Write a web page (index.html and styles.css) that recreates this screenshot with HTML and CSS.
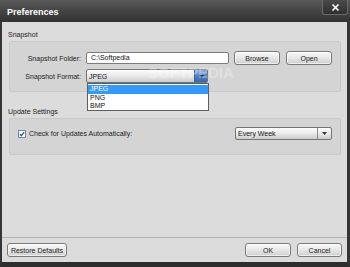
FILE: index.html
```html
<!DOCTYPE html>
<html>
<head>
<meta charset="utf-8">
<link rel="stylesheet" href="styles.css">
</head>
<body>
<div class="window">
  <div class="titlebar">
    <span class="title">Preferences</span>
    <div class="close">
      <svg width="9" height="9" viewBox="0 0 9 9"><path d="M1.5 1.5l6 6M7.5 1.5l-6 6" stroke="#fff" stroke-width="1.7" fill="none"/></svg>
    </div>
  </div>
  <div class="body">
    <div class="section-label">Snapshot</div>
    <div class="group snap">
      <div class="row">
        <span class="lbl">Snapshot Folder:</span>
        <div class="input">C:\Softpedia</div>
        <div class="btn browse">Browse</div>
        <div class="btn open">Open</div>
      </div>
      <div class="row second">
        <span class="lbl">Snapshot Format:</span>
        <div class="select fmt">
          <span class="val">JPEG</span>
          <span class="arrow blue"><svg width="5" height="3" viewBox="0 0 5 3"><path d="M0 0h5L2.5 3z" fill="#1a2a44"/></svg></span>
          <ul class="list">
            <li class="sel">JPEG</li>
            <li>PNG</li>
            <li>BMP</li>
          </ul>
        </div>
      </div>
    </div>
    <div class="section-label upd">Update Settings</div>
    <div class="group update">
      <div class="row">
        <span class="check"><svg width="8" height="8" viewBox="0 0 8 8"><rect x="0.5" y="0.5" width="7" height="7" fill="#fff" stroke="#6d87ad"/><path d="M2 4.2l1.4 1.5L6.2 2.2" stroke="#2a55a0" stroke-width="1.3" fill="none"/></svg></span>
        <span class="chk-text">Check for Updates Automatically:</span>
        <div class="select week">
          <span class="val">Every Week</span>
          <span class="arrow gray"><svg width="5" height="3" viewBox="0 0 5 3"><path d="M0 0h5L2.5 3z" fill="#333"/></svg></span>
        </div>
      </div>
    </div>
    <div class="spacer"></div>
    <div class="footer">
      <div class="btn restore">Restore Defaults</div>
      <div class="spacer-h"></div>
      <div class="btn ok">OK</div>
      <div class="btn cancel">Cancel</div>
    </div>
    <span class="watermark">SOFTPEDIA</span>
  </div>
</div>
</body>
</html>
```

FILE: styles.css
```css
* { box-sizing: border-box; }
html, body { margin: 0; padding: 0; }
body {
  width: 350px;
  height: 267px;
  overflow: hidden;
  font-family: "Liberation Sans", Arial, sans-serif;
  font-size: 7px;
  color: #1e1e1e;
  background: #2e2e2e;
}
.window {
  width: 350px;
  height: 267px;
  display: flex;
  flex-direction: column;
}
.titlebar {
  height: 22px;
  flex: none;
  display: flex;
  align-items: center;
  justify-content: space-between;
  padding: 0 2px 0 7px;
  background: linear-gradient(#5a5a5a, #424242 55%, #323232);
}
.title {
  color: #fff;
  font-weight: bold;
  font-size: 9px;
  margin-top: 1px;
}
.close {
  width: 26px;
  height: 15px;
  align-self: flex-start;
  border: 1px solid #6a6a6a;
  border-top: none;
  border-radius: 0 0 3px 3px;
  background: linear-gradient(#4a4a4a, #303030);
  display: flex;
  align-items: center;
  justify-content: center;
}
.body {
  position: relative;
  flex: 1;
  display: flex;
  flex-direction: column;
  background: #dcdcdc;
  border-left: 2px solid #353535;
  border-right: 3px solid #353535;
  border-bottom: 5px solid #2e2e2e;
}
.section-label {
  line-height: 10px;
  height: 10px;
  padding-left: 6px;
  margin-top: 8px;
  color: #222;
}
.section-label.upd { margin-top: 15px; }
.group {
  margin: 1px 6px 0 7px;
  border: 1px solid #c9c9c9;
  border-radius: 2px;
  background: #d4d4d4;
}
.group.snap { padding: 9px 8px 8px 0; }
.group.update { padding: 8px 8px 14px 8px; }
.row {
  display: flex;
  align-items: center;
  height: 14px;
}
.row.second { margin-top: 4px; }
.group.update .row { height: 13px; }
.lbl {
  width: 71px;
  text-align: right;
  color: #222;
}
.input {
  width: 143px;
  height: 12px;
  margin-left: 5px;
  background: #fff;
  border: 1px solid #7c7c7c;
  border-radius: 2px;
  padding-left: 4px;
  line-height: 10px;
  color: #111;
}
.btn {
  height: 14px;
  width: 46px;
  border: 1px solid #7a7a7a;
  border-radius: 3px;
  background: linear-gradient(#fafafa, #e6e6e6 50%, #cfcfcf);
  display: flex;
  align-items: center;
  justify-content: center;
  color: #222;
  box-shadow: inset 0 0 0 1px rgba(255,255,255,0.6);
}
.btn.browse { margin-left: 5px; }
.btn.open { margin-left: 6px; }
.select {
  position: relative;
  height: 14px;
  border: 1px solid #747474;
  border-radius: 2px;
  background: linear-gradient(#fdfdfd, #e9e9e9 50%, #cdcdcd);
  display: flex;
  align-items: center;
}
.select .val {
  flex: 1;
  padding-left: 2px;
  color: #111;
}
.select.fmt { width: 122px; margin-left: 5px; }
.select.week { width: 97px; height: 13px; margin-left: auto; }
.arrow {
  width: 13px;
  height: 100%;
  display: flex;
  align-items: center;
  justify-content: center;
}
.arrow.blue {
  background: linear-gradient(#8fb3e6, #4f7fc6 50%, #3a66aa);
  border-left: 1px solid #3b5f96;
  border-radius: 0 1px 1px 0;
}
.arrow.gray {
  width: 14px;
  border-left: 1px solid #8a8a8a;
}
.list {
  position: absolute;
  top: 13px;
  left: 0;
  width: 122px;
  margin: 0;
  padding: 1px 0 0 0;
  list-style: none;
  background: #fff;
  border: 1px solid #5f5f5f;
  height: 28px;
  z-index: 2;
}
.list li {
  height: 8.5px;
  line-height: 8.5px;
  padding-left: 2px;
  color: #111;
}
.list li.sel {
  background: #3399ff;
  color: #fff;
}
.check {
  width: 8px;
  height: 8px;
  display: flex;
}
.chk-text {
  margin-left: 3px;
  color: #222;
}
.spacer { flex: 1; }
.footer {
  flex: none;
  display: flex;
  align-items: center;
  border-top: 1px solid #b4b4b4;
  padding: 5px;
  height: 25px;
}
.btn.restore { width: 60px; }
.spacer-h { flex: 1; }
.btn.ok { width: 46px; }
.btn.cancel { width: 45px; margin-left: 6px; }
.watermark {
  position: absolute;
  left: 146px;
  top: 42px;
  font-size: 15px;
  font-weight: bold;
  color: #ffffff;
  opacity: 0.3;
  z-index: 1;
  pointer-events: none;
}
```
